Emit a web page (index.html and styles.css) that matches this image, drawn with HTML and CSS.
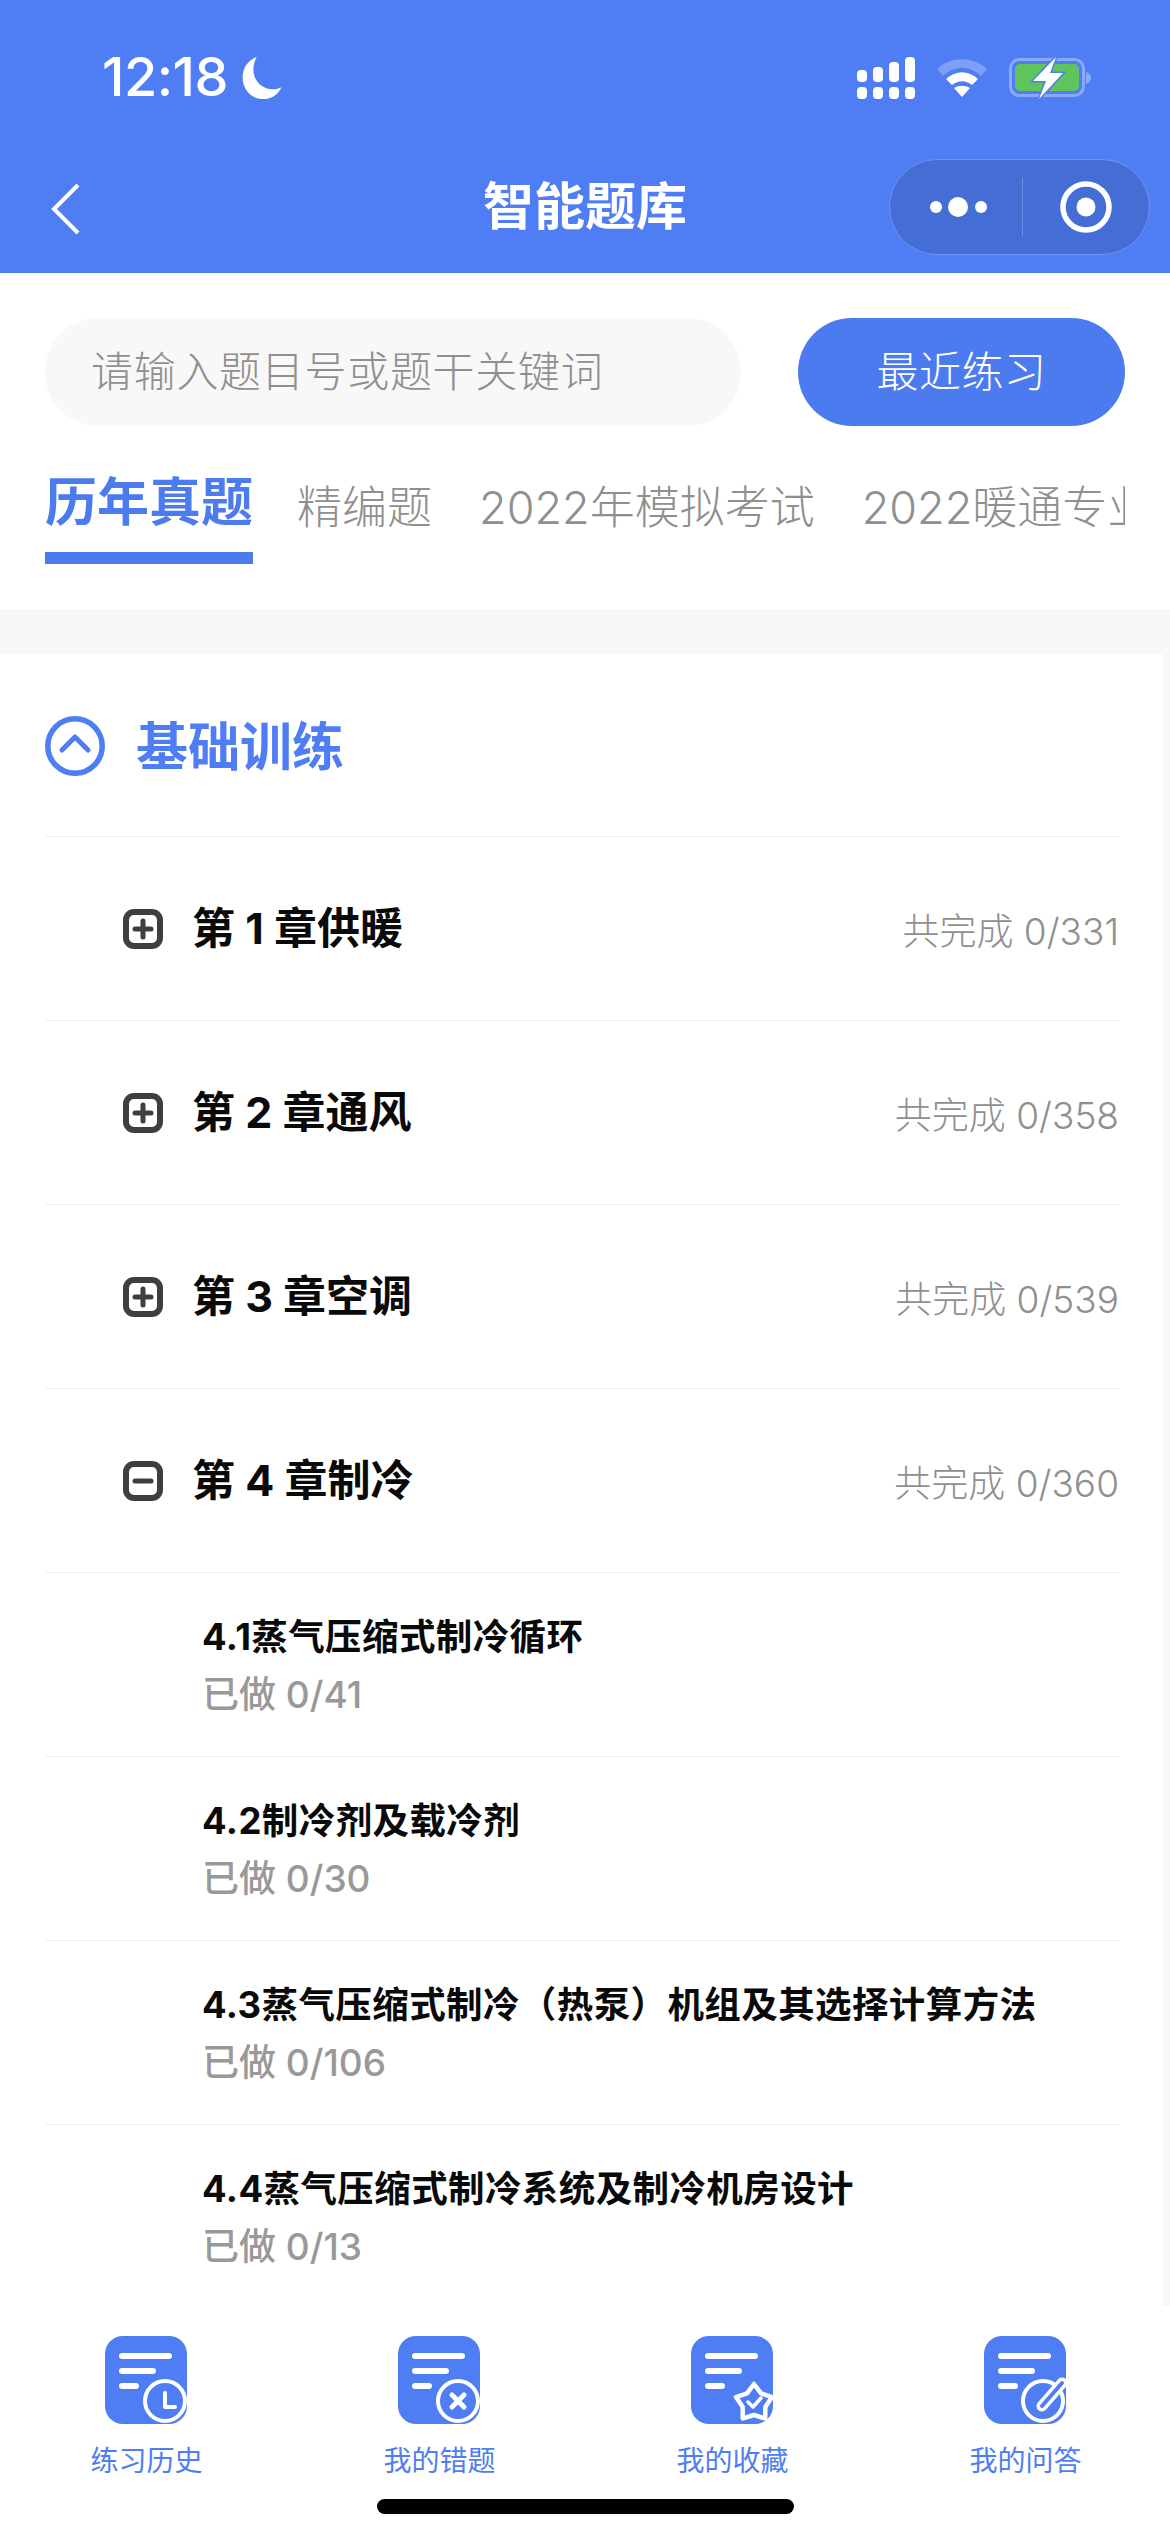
FILE: index.html
```html
<!DOCTYPE html>
<html lang="zh">
<head>
<meta charset="utf-8">
<title>智能题库</title>
<link rel="stylesheet" href="styles.css">
</head>
<body>
<div class="phone">
  <header class="topbar">
    <div class="status">
      <div class="status-left">
        <span class="time">12:18</span>
        <svg class="moon" width="40" height="42" viewBox="0 0 36 39"><path fill="#fff" d="M13 0C5 3 0 10 0 19c0 11 8 20 19 20 8 0 14-4 17-11-2 1-5 2-8 2C18 30 10 22 10 12c0-4 1-8 3-12z"/></svg>
      </div>
      <div class="status-right">
        <svg width="58" height="42" viewBox="0 0 58 42"><g fill="#fff"><rect x="0" y="13" width="10" height="12" rx="4"/><rect x="16" y="10" width="10" height="15" rx="4"/><rect x="32" y="5" width="10" height="20" rx="4"/><rect x="48" y="0" width="10" height="25" rx="4"/><rect x="0" y="30" width="10" height="12" rx="4"/><rect x="16" y="30" width="10" height="12" rx="4"/><rect x="32" y="30" width="10" height="12" rx="4"/><rect x="48" y="30" width="10" height="12" rx="4"/></g></svg>
        <svg class="wifi" width="50" height="38" viewBox="0 0 50 38"><path fill="#7f9ff7" d="M0 10C14-3 36-3 50 10l-6 7C32 6 18 6 6 17z"/><path fill="#fff" d="M9 20c10-9 22-9 32 0l-6 6c-7-5-13-5-20 0z"/><path fill="#fff" d="M17 29c5-3 11-3 16 0l-8 9z"/></svg>
        <svg class="battery" width="84" height="42" viewBox="0 0 84 42"><rect x="1.500" y="2.500" width="73" height="36" rx="9" fill="none" stroke="#8ba9f8" stroke-width="3"/><path d="M77 15c3 1 5 3 5 6s-2 5-5 6z" fill="#8ba9f8"/><rect x="6" y="7" width="64" height="27" rx="5" fill="#60c45c"/><path d="M47 0 24 24h13l-7 18 24-26H41z" fill="#fff" stroke="#4f7df3" stroke-width="3" paint-order="stroke"/></svg>
      </div>
    </div>
    <div class="navbar">
      <svg class="back" width="32" height="52" viewBox="0 0 32 52"><path d="M28 2 4 26l24 24" fill="none" stroke="#fff" stroke-width="4"/></svg>
      <h1 class="title">智能题库</h1>
      <div class="capsule">
        <div class="capsule-cell capsule-more">
          <svg width="58" height="20" viewBox="0 0 58 20"><circle cx="6" cy="10" r="6" fill="#fff"/><circle cx="28" cy="10" r="10" fill="#fff"/><circle cx="51" cy="10" r="6" fill="#fff"/></svg>
        </div>
        <span class="capsule-sep"></span>
        <div class="capsule-cell">
          <svg width="52" height="52" viewBox="0 0 52 52"><circle cx="26" cy="26" r="23" fill="none" stroke="#fff" stroke-width="5.500"/><circle cx="26" cy="26" r="9.500" fill="#fff"/></svg>
        </div>
      </div>
    </div>
  </header>

  <section class="search-row">
    <div class="search">请输入题目号或题干关键词</div>
    <div class="recent">最近练习</div>
  </section>

  <nav class="tabs">
    <div class="tab active">历年真题</div>
    <div class="tab">精编题</div>
    <div class="tab">2022年模拟考试</div>
    <div class="tab">2022暖通专业</div>
  </nav>
  <div class="band"></div>

  <main class="content">
    <div class="group-head">
      <svg class="group-icon" width="60" height="60" viewBox="0 0 60 60"><circle cx="30" cy="30" r="27.200" fill="none" stroke="#4f7df3" stroke-width="5.500"/><path d="M17 34 30 21l13 13" fill="none" stroke="#4f7df3" stroke-width="5" stroke-linecap="round" stroke-linejoin="round"/></svg>
      <span>基础训练</span>
    </div>
    <div class="list">
      <div class="chapter">
        <div class="chapter-left">
          <svg width="40" height="40" viewBox="0 0 40 40"><rect x="3" y="3" width="34" height="34" rx="8" fill="none" stroke="#3f3f3f" stroke-width="6"/><path d="M12 20h16M20 12v16" stroke="#3f3f3f" stroke-width="5" stroke-linecap="round"/></svg>
          <span class="chapter-name">第 1 章供暖</span>
        </div>
        <span class="chapter-count">共完成 0/331</span>
      </div>
      <div class="chapter">
        <div class="chapter-left">
          <svg width="40" height="40" viewBox="0 0 40 40"><rect x="3" y="3" width="34" height="34" rx="8" fill="none" stroke="#3f3f3f" stroke-width="6"/><path d="M12 20h16M20 12v16" stroke="#3f3f3f" stroke-width="5" stroke-linecap="round"/></svg>
          <span class="chapter-name">第 2 章通风</span>
        </div>
        <span class="chapter-count">共完成 0/358</span>
      </div>
      <div class="chapter">
        <div class="chapter-left">
          <svg width="40" height="40" viewBox="0 0 40 40"><rect x="3" y="3" width="34" height="34" rx="8" fill="none" stroke="#3f3f3f" stroke-width="6"/><path d="M12 20h16M20 12v16" stroke="#3f3f3f" stroke-width="5" stroke-linecap="round"/></svg>
          <span class="chapter-name">第 3 章空调</span>
        </div>
        <span class="chapter-count">共完成 0/539</span>
      </div>
      <div class="chapter">
        <div class="chapter-left">
          <svg width="40" height="40" viewBox="0 0 40 40"><rect x="3" y="3" width="34" height="34" rx="8" fill="none" stroke="#3f3f3f" stroke-width="6"/><path d="M12 20h16" stroke="#3f3f3f" stroke-width="5" stroke-linecap="round"/></svg>
          <span class="chapter-name">第 4 章制冷</span>
        </div>
        <span class="chapter-count">共完成 0/360</span>
      </div>
      <div class="section">
        <div class="section-name">4.1蒸气压缩式制冷循环</div>
        <div class="section-count">已做 0/41</div>
      </div>
      <div class="section">
        <div class="section-name">4.2制冷剂及载冷剂</div>
        <div class="section-count">已做 0/30</div>
      </div>
      <div class="section">
        <div class="section-name">4.3蒸气压缩式制冷（热泵）机组及其选择计算方法</div>
        <div class="section-count">已做 0/106</div>
      </div>
      <div class="section">
        <div class="section-name">4.4蒸气压缩式制冷系统及制冷机房设计</div>
        <div class="section-count">已做 0/13</div>
      </div>
    </div>
  </main>

  <footer class="bottom">
    <div class="bottom-item">
      <svg width="84" height="88" viewBox="0 0 84 88"><rect width="82" height="88" rx="18" fill="#4f7df3"/><path d="M17 20h47M17 35h31M17 50h14" stroke="#fff" stroke-width="6" stroke-linecap="round"/><circle cx="60" cy="65" r="20" fill="#4f7df3" stroke="#fff" stroke-width="4"/><path d="M60 57v14h10" fill="none" stroke="#fff" stroke-width="4" stroke-linecap="round" stroke-linejoin="round"/></svg>
      <span>练习历史</span>
    </div>
    <div class="bottom-item">
      <svg width="84" height="88" viewBox="0 0 84 88"><rect width="82" height="88" rx="18" fill="#4f7df3"/><path d="M17 20h47M17 35h31M17 50h14" stroke="#fff" stroke-width="6" stroke-linecap="round"/><circle cx="60" cy="65" r="20" fill="#4f7df3" stroke="#fff" stroke-width="4"/><path d="m54 59 12 12M66 59 54 71" fill="none" stroke="#fff" stroke-width="5" stroke-linecap="round"/></svg>
      <span>我的错题</span>
    </div>
    <div class="bottom-item">
      <svg width="84" height="88" viewBox="0 0 84 88"><rect width="82" height="88" rx="18" fill="#4f7df3"/><path d="M17 20h47M17 35h31M17 50h14" stroke="#fff" stroke-width="6" stroke-linecap="round"/><path d="M63 48 70 57.300 81 61.100 74.400 70.700 74.200 82.400 63 79 51.800 82.400 51.600 70.700 45 61.100 56 57.300z" fill="#4f7df3" stroke="#fff" stroke-width="4.500" stroke-linejoin="round"/><path d="m57 66 5 5 8-9" fill="none" stroke="#fff" stroke-width="3.500" stroke-linecap="round" stroke-linejoin="round"/></svg>
      <span>我的收藏</span>
    </div>
    <div class="bottom-item">
      <svg width="84" height="88" viewBox="0 0 84 88"><rect width="82" height="88" rx="18" fill="#4f7df3"/><path d="M17 20h47M17 35h31M17 50h14" stroke="#fff" stroke-width="6" stroke-linecap="round"/><circle cx="59" cy="65" r="20" fill="#4f7df3" stroke="#fff" stroke-width="4"/><path d="M58 70 78 47" stroke="#fff" stroke-width="11" stroke-linecap="round"/><path d="M58 70 78 47" stroke="#4f7df3" stroke-width="4" stroke-linecap="round"/></svg>
      <span>我的问答</span>
    </div>
    <div class="home-bar"></div>
  </footer>
</div>
</body>
</html>
```
FILE: styles.css
```css
* { box-sizing: border-box; margin: 0; padding: 0; }
html, body { background: #fff; }
body { width: 1170px; height: 2532px; overflow: hidden; font-family: Inter, "Noto Sans CJK SC", "Noto Sans", sans-serif; }
.phone { position: relative; width: 1170px; height: 2532px; overflow: hidden; background: #fff; }

.topbar { height: 273px; background: #4f7df3; display: flex; flex-direction: column; }
.status { height: 159px; display: flex; justify-content: space-between; padding: 57px 77px 0 102px; }
.status-left { display: flex; align-items: flex-start; gap: 14px; }
.time { font-size: 54px; font-weight: 500; line-height: 40px; color: #fff; letter-spacing: -0.5px; }
.status-right { display: flex; align-items: flex-start; gap: 22px; }
.wifi { margin-top: 2px; }

.navbar { position: relative; height: 114px; display: flex; align-items: flex-start; justify-content: space-between; padding: 0 20px 0 50px; }
.back { margin-top: 24px; }
.title { position: absolute; left: 0; right: 0; top: 15px; text-align: center; font-size: 51px; font-weight: 700; line-height: 66px; color: #fff; }
.capsule { width: 261px; height: 96px; display: flex; align-items: center; background: #446dd6; border: 1px solid #6f93f0; border-radius: 48px; }
.capsule-cell { flex: 1; display: flex; justify-content: center; align-items: center; }
.capsule-more { padding-left: 6px; }
.capsule-sep { width: 1px; height: 58px; background: #6d8fe8; }

.search-row { display: flex; justify-content: space-between; padding: 45px 45px 0; height: 153px; }
.search { width: 696px; height: 108px; border-radius: 54px; background: #f8f8f8; padding-left: 46px; font-size: 42px; line-height: 108px; color: #8f8f8f; letter-spacing: 0.7px; font-weight: 300; }
.recent { width: 327px; height: 108px; border-radius: 54px; background: #4c7bf0; font-size: 42px; line-height: 108px; text-align: center; color: #fff; letter-spacing: 0.5px; font-weight: 300; }

.tabs { height: 183px; margin-left: 45px; width: 1080px; display: flex; align-items: flex-start; gap: 47px; overflow: hidden; white-space: nowrap; }
.tab { flex: none; font-size: 45px; line-height: 62px; margin-top: 51px; color: #8f8f8f; font-weight: 300; }
.tab.active { position: relative; font-size: 52px; font-weight: 700; color: #4c7bf0; margin-top: 44px; margin-right: -3px; width: 208px; height: 94px; line-height: 66px; }
.tab.active::after { content: ""; position: absolute; left: 0; right: 0; top: 82px; height: 12px; background: #4c7bf0; }
.band { height: 45px; background: #f8f8f8; }

.content { padding: 0 43px 0 45px; border-right: 7px solid #f8f8f8; }
.group-head { height: 183px; display: flex; align-items: center; gap: 31px; font-size: 52px; font-weight: 700; color: #4f7df3; padding-bottom: 4px; border-bottom: 1px solid #efefef; }
.group-icon { margin-top: 6px; }
.chapter { height: 184px; display: flex; align-items: center; justify-content: space-between; border-bottom: 1px solid #efefef; padding: 0 1px 0 78px; }
.chapter-left { display: flex; align-items: center; gap: 29px; }
.chapter-name { font-size: 43px; line-height: 60px; margin-bottom: 2px; font-weight: 700; color: #0a0a0a; }
.chapter-count { font-size: 37px; color: #8f8f8f; font-weight: 300; }
.section { height: 184px; padding: 37px 0 0 157px; border-bottom: 1px solid #efefef; }
.section-name { font-size: 36.500px; line-height: 54px; font-weight: 700; color: #0a0a0a; letter-spacing: 0.4px; }
.section-count { font-size: 37px; line-height: 54px; margin-top: 4px; font-weight: 500; color: #999; }

.bottom { position: absolute; left: 0; right: 0; bottom: 0; height: 226px; background: #fff; display: grid; grid-template-columns: repeat(4, 293px); }
.bottom-item { display: flex; flex-direction: column; align-items: center; padding-top: 30px; font-size: 28px; line-height: 40px; gap: 17px; color: #4f7df3; font-weight: 400; }
.home-bar { position: absolute; left: 377px; bottom: 18px; width: 417px; height: 15px; border-radius: 8px; background: #000; }
```
